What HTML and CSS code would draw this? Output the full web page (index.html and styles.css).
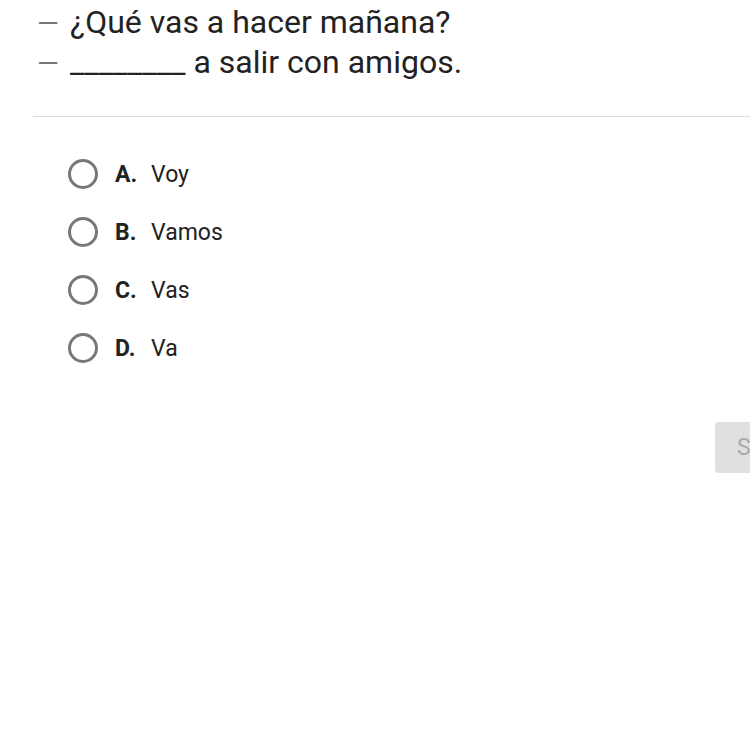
FILE: index.html
```html
<!DOCTYPE html>
<html lang="es">
<head>
    <meta charset="UTF-8">
    <title>Pregunta</title>
    <link rel="stylesheet" href="styles.css">
</head>
<body>
    <div class="question">
        <div class="line"><span class="dash">—</span><span>¿Qué vas a hacer mañana?</span></div>
        <div class="line"><span class="dash">—</span><span>________ a salir con amigos.</span></div>
    </div>
    <hr class="divider">
    <ul class="options">
        <li class="option"><span class="radio"></span><b>A.</b><span>Voy</span></li>
        <li class="option"><span class="radio"></span><b>B.</b><span>Vamos</span></li>
        <li class="option"><span class="radio"></span><b>C.</b><span>Vas</span></li>
        <li class="option"><span class="radio"></span><b>D.</b><span>Va</span></li>
    </ul>
    <div class="actions">
        <button class="submit">Submit</button>
    </div>
</body>
</html>
```

FILE: styles.css
```css
body {
    margin: 0;
    background: #fff;
    color: #222;
    font-family: Roboto, "Liberation Sans", sans-serif;
    overflow: hidden;
}
.question {
    padding: 2px 0 0 37px;
    font-size: 32px;
    line-height: 40px;
}
.line {
    display: flex;
    align-items: baseline;
    gap: 12px;
    height: 40px;
}
.dash {
    color: #777;
    font-size: 28px;
    line-height: 1;
    width: 21px;
}
.divider {
    margin: 34px 0 0 33px;
    border: none;
    border-top: 1px solid #ddd;
}
.options {
    list-style-type: none;
    margin: 0;
    padding: 28px 0 0 68px;
}
.option {
    display: flex;
    align-items: center;
    height: 58px;
    font-size: 23px;
}
.radio {
    width: 24px;
    height: 24px;
    border: 3px solid #777;
    border-radius: 50%;
    margin-right: 17px;
}
.option b {
    width: 36px;
}
.actions {
    display: flex;
    justify-content: flex-end;
    padding-top: 45px;
}
.submit {
    margin-right: -120px;
    width: 155px;
    height: 51px;
    border: none;
    border-radius: 4px;
    background: #e0e0e0;
    color: #aaa;
    font-family: inherit;
    font-size: 23px;
    text-align: left;
    padding-left: 22px;
}
```
